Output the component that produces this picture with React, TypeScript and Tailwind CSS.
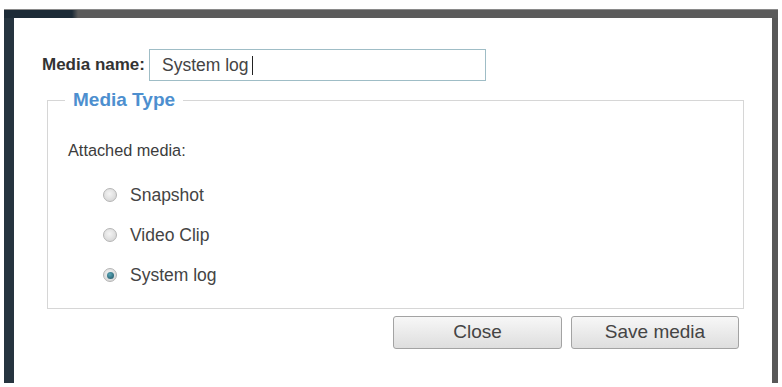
import { useState } from "react";

const options = ["Snapshot", "Video Clip", "System log"];

function Radio({ checked }: { checked: boolean }) {
  return (
    <span className="flex h-[14px] w-[14px] items-center justify-center rounded-full border border-[#b5b5b5] bg-[radial-gradient(circle_at_45%_40%,#f4f4f4,#cfcfcf)]">
      {checked && <span className="h-[7px] w-[7px] rounded-full bg-[radial-gradient(circle_at_40%_35%,#5aa7b8,#1c4f5f)]" />}
    </span>
  );
}

export default function App() {
  const [media, setMedia] = useState("System log");

  return (
    <div className="h-[387px] w-[782px] overflow-hidden bg-white px-[4px] pt-[9px] font-['Liberation_Sans',Arial,sans-serif]">
      <div className="h-[9px] bg-[linear-gradient(90deg,#1d2b37_0px,#1d2b37_68px,#5b5b5b_74px,#5b5b5b_100%)] border-t border-t-[#8a8a8a]" />
      <div className="h-[365px] border-l-[10px] border-r-[6px] border-l-[#26343f] border-r-[#585858]">
        <div className="flex items-center pl-[28px] pt-[31px]">
          <span className="mr-[4px] text-[17px] font-bold text-[#333]">Media name:</span>
          <div className="flex h-[32px] w-[337px] items-center border border-[#9fbdc6] pl-[12px] text-[17.5px] text-[#444]">
            System log
            <span className="ml-[3px] h-[19px] w-px bg-[#222]" />
          </div>
        </div>

        <fieldset className="ml-[33px] mt-[8px] w-[697px] border border-[#d6d6d6] pb-[13px]">
          <legend className="ml-[17px] px-[8px] text-[19px] font-bold leading-[22px] text-[#4d8fcf]">
            Media Type
          </legend>
          <div className="pl-[20px] pt-[29px] text-[16.3px] leading-[20px] text-[#3c3c3c]">Attached media:</div>
          <div className="mt-[15px]">
            {options.map((o) => (
              <label
                key={o}
                onClick={() => setMedia(o)}
                className="flex h-[40px] cursor-pointer items-center pl-[55px] text-[17.5px] text-[#444]"
              >
                <Radio checked={media === o} />
                <span className="ml-[13px]">{o}</span>
              </label>
            ))}
          </div>
        </fieldset>

        <div className="mt-[7px] flex justify-end gap-[9px] pr-[33px]">
          <button className="h-[33px] w-[169px] rounded-[3px] border border-[#a3a3a3] bg-[linear-gradient(#f7f7f7,#dedede)] text-[19px] text-[#444]">
            Close
          </button>
          <button className="h-[33px] w-[168px] rounded-[3px] border border-[#a3a3a3] bg-[linear-gradient(#f7f7f7,#dedede)] text-[19px] text-[#444]">
            Save media
          </button>
        </div>
      </div>
    </div>
  );
}
